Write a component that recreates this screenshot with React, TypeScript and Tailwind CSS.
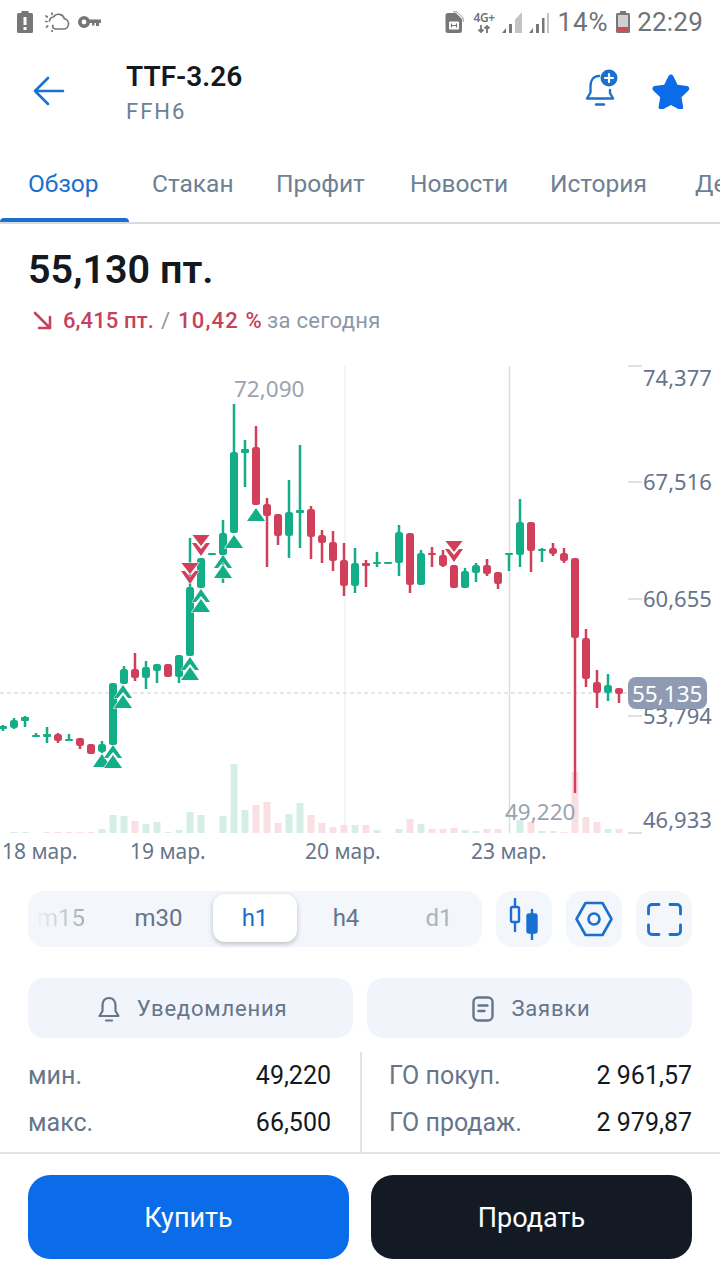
import React from "react";

const BLUE = "#1a6fd0";
const GREEN = "#13ad87";
const RED = "#d0405a";

// x, wick top, wick bottom, body top, body bottom, colour
type Candle = [number, number, number, number, number, "g" | "r"];

const CANDLES: Candle[] = [
  [3, 725, 731, 726, 729, "g"],
  [14, 718, 729, 720, 728, "g"],
  [25, 716, 727, 717, 721, "g"],
  [36, 733, 737, 735, 737, "g"],
  [47, 727, 743, 734, 737, "g"],
  [58, 733, 743, 734, 741, "r"],
  [69, 734, 741, 739, 741, "g"],
  [80, 738, 749, 738, 746, "r"],
  [91, 744, 754, 744, 754, "r"],
  [102, 741, 753, 744, 752, "g"],
  [113, 683, 745, 683, 745, "g"],
  [124, 666, 684, 669, 684, "g"],
  [135, 653, 681, 669, 678, "r"],
  [146, 661, 689, 667, 678, "g"],
  [157, 664, 683, 664, 671, "g"],
  [168, 664, 677, 664, 677, "r"],
  [179, 655, 683, 655, 677, "g"],
  [190, 538, 656, 587, 656, "g"],
  [201, 558, 588, 558, 588, "g"],
  [212, 553, 555, 553, 555, "g"],
  [223, 520, 583, 533, 555, "g"],
  [234, 404, 533, 452, 533, "g"],
  [245, 440, 487, 449, 453, "g"],
  [256, 426, 505, 447, 505, "r"],
  [267, 498, 567, 504, 516, "r"],
  [278, 514, 545, 514, 536, "r"],
  [289, 480, 558, 512, 536, "g"],
  [300, 445, 548, 510, 513, "g"],
  [311, 506, 559, 509, 537, "r"],
  [322, 530, 563, 535, 543, "r"],
  [333, 531, 571, 542, 561, "r"],
  [344, 543, 596, 560, 586, "r"],
  [355, 548, 593, 563, 586, "g"],
  [366, 560, 587, 563, 566, "r"],
  [377, 552, 567, 562, 564, "g"],
  [388, 562, 564, 562, 564, "g"],
  [399, 525, 576, 532, 563, "g"],
  [410, 533, 593, 533, 585, "r"],
  [421, 550, 585, 553, 585, "g"],
  [432, 547, 567, 553, 555, "r"],
  [443, 550, 567, 555, 566, "r"],
  [454, 565, 588, 565, 588, "r"],
  [465, 568, 588, 571, 588, "g"],
  [476, 563, 582, 565, 573, "g"],
  [487, 559, 576, 565, 574, "r"],
  [498, 572, 589, 572, 584, "r"],
  [509, 553, 571, 553, 555, "g"],
  [520, 499, 567, 522, 555, "g"],
  [531, 522, 572, 522, 551, "r"],
  [542, 548, 562, 549, 551, "g"],
  [553, 543, 556, 548, 554, "r"],
  [564, 548, 563, 553, 561, "r"],
  [575, 558, 793, 558, 638, "r"],
  [586, 629, 687, 638, 679, "r"],
  [597, 670, 708, 682, 693, "r"],
  [608, 674, 701, 685, 693, "g"],
  [619, 688, 703, 688, 694, "r"],
];

const VOLUMES: [number, number, "g" | "r"][] = [
  [14, 1, "g"], [25, 1, "g"], [47, 1, "r"], [58, 1, "r"], [69, 1, "r"], [80, 1, "r"], [91, 1, "r"],
  [102, 4, "g"], [113, 18, "g"], [124, 17, "g"], [135, 12, "r"], [146, 9, "g"], [157, 11, "g"],
  [168, 1, "g"], [179, 3, "g"], [190, 21, "g"], [201, 18, "g"], [223, 17, "g"], [234, 69, "g"],
  [245, 23, "g"], [256, 28, "r"], [267, 31, "r"], [278, 10, "r"], [289, 19, "g"], [300, 30, "g"],
  [311, 18, "r"], [322, 10, "r"], [333, 6, "r"], [344, 8, "r"], [355, 8, "g"], [366, 8, "r"],
  [377, 3, "g"], [399, 4, "g"], [410, 14, "r"], [421, 9, "g"], [432, 4, "r"], [443, 4, "r"],
  [454, 5, "r"], [465, 3, "g"], [476, 2, "g"], [487, 4, "r"], [498, 4, "r"], [520, 13, "g"],
  [531, 11, "r"], [542, 2, "g"], [553, 2, "r"], [564, 1, "r"], [575, 61, "r"], [586, 16, "r"],
  [597, 11, "r"], [608, 4, "g"], [619, 4, "r"],
];

const PRICE_TICKS = [
  { y: 366, label: "74,377", ty: 386 },
  { y: 482, label: "67,516", ty: 490 },
  { y: 599, label: "60,655", ty: 607 },
  { y: 716, label: "53,794", ty: 724 },
  { y: 833, label: "46,933", ty: 828 },
];

const DATES = [
  { x: 2, label: "18 мар." },
  { x: 130, label: "19 мар." },
  { x: 305, label: "20 мар." },
  { x: 471, label: "23 мар." },
];

function UpMarker({ x, top, chevron }: { x: number; top: number; chevron?: boolean }) {
  return (
    <g>
      {chevron && (
        <polygon
          points={`${x},${top - 10} ${x + 9},${top + 3} ${x + 5},${top + 3} ${x},${top - 3} ${x - 5},${top + 3} ${x - 9},${top + 3}`}
          fill={GREEN}
          stroke="#fff"
          strokeWidth="1"
          paintOrder="stroke"
        />
      )}
      <polygon points={`${x - 9},${top + 13} ${x + 9},${top + 13} ${x},${top}`} fill={GREEN} stroke="#fff" strokeWidth="1.2" paintOrder="stroke" />
    </g>
  );
}

function DownMarker({ x, top }: { x: number; top: number }) {
  return (
    <g>
      <polygon
        points={`${x - 9},${top + 8} ${x - 5},${top + 8} ${x},${top + 14} ${x + 5},${top + 8} ${x + 9},${top + 8} ${x},${top + 21}`}
        fill={RED}
        stroke="#fff"
        strokeWidth="1"
        paintOrder="stroke"
      />
      <polygon points={`${x - 8.5},${top} ${x + 8.5},${top} ${x},${top + 11}`} fill={RED} stroke="#fff" strokeWidth="1.2" paintOrder="stroke" />
    </g>
  );
}

function Chart() {
  return (
    <svg width="720" height="510" viewBox="0 360 720 510" className="block font-['Noto_Sans',sans-serif]">
      <line x1="345" y1="366" x2="345" y2="833" stroke="#f1f2f3" strokeWidth="1.5" />
      <line x1="509.5" y1="366" x2="509.5" y2="833" stroke="#dcdde0" strokeWidth="1.5" />
      <line x1="0" y1="693" x2="628" y2="693" stroke="#c9cdd2" strokeWidth="1" strokeDasharray="4 3" />

      {VOLUMES.map(([x, h, c]) => (
        <rect key={x} x={x - 3.5} y={833 - h} width="7" height={h} fill={c === "g" ? "#d5efe8" : "#fae0e4"} />
      ))}

      {CANDLES.map(([x, wt, wb, bt, bb, c]) => {
        const fill = c === "g" ? GREEN : RED;
        return (
          <g key={x}>
            <rect x={x - 1.25} y={wt} width="2.5" height={wb - wt} fill={fill} />
            <rect x={x - 4} y={bt} width="8" height={Math.max(bb - bt, 2)} rx={bb - bt > 4 ? 2.5 : 1} fill={fill} />
          </g>
        );
      })}

      <UpMarker x={102} top={754} />
      <UpMarker x={113} top={755} chevron />
      <UpMarker x={123} top={695} chevron />
      <UpMarker x={190} top={667} chevron />
      <UpMarker x={201} top={599} chevron />
      <UpMarker x={223} top={565} chevron />
      <UpMarker x={234} top={535} />
      <UpMarker x={256} top={508} />
      <DownMarker x={190} top={563} />
      <DownMarker x={201} top={535} />
      <DownMarker x={454} top={541} />

      <text x="234" y="397" fontSize="22.5" fill="#9aa3b0">72,090</text>
      <text x="505" y="820" fontSize="22.5" fill="#9aa3b0">49,220</text>

      {PRICE_TICKS.map((t) => (
        <g key={t.label}>
          <line x1="628" y1={t.y} x2="642" y2={t.y} stroke="#d5d7da" strokeWidth="1.5" />
          <text x="643" y={t.ty} fontSize="22" fill="#66758a">{t.label}</text>
        </g>
      ))}

      <rect x="628" y="677" width="79" height="32" rx="8" fill="#8f9bb3" />
      <text x="632" y="702" fontSize="22.5" fill="#fff">55,135</text>

      {DATES.map((d) => (
        <text key={d.label} x={d.x} y="859" fontSize="21" fill="#66758a">{d.label}</text>
      ))}
    </svg>
  );
}

function StatusBar() {
  return (
    <div className="flex h-[44px] items-center justify-between pl-[17px] pr-[17px] text-[#6f7377]">
      <div className="flex items-center">
        <svg width="16" height="22" viewBox="0 0 16 22">
          <rect x="4.5" y="0" width="7" height="3" fill="#777" />
          <rect x="0" y="2" width="16" height="20" rx="1.5" fill="#777" />
          <rect x="6.5" y="6" width="3" height="8" fill="#fff" />
          <rect x="6.5" y="16" width="3" height="3" fill="#fff" />
        </svg>
        <svg width="25" height="20" viewBox="0 0 25 20" className="ml-[12px]" fill="none" stroke="#777" strokeWidth="1.7" strokeLinecap="round">
          <path d="M8 13.500c-1.500 2.500 1 3.500 3 3.500h7.500a5.200 5.200 0 0 0 .8-10.300A6 6 0 0 0 8.500 5c-2.500 0-4 2-4 4" />
          <path d="M7 1v1.500M1 4l1.200 1M0.500 9.500H2M1.500 15l1.200-1M7 18.500V20" />
        </svg>
        <svg width="23" height="12" viewBox="0 0 23 12" className="ml-[8px]">
          <path d="M6 0a6 6 0 1 1-5.600 8A6 6 0 0 1 6 0zm0 3.600a2.400 2.400 0 1 0 0 4.800 2.400 2.400 0 0 0 0-4.800z" fill="#777" fillRule="evenodd" />
          <path d="M11 3.500h12v3.500h-2v3h-3V7h-1.500v2.500H14V7h-3z" fill="#777" />
        </svg>
      </div>
      <div className="flex items-center font-['Roboto',sans-serif]">
        <svg width="19" height="22" viewBox="0 0 19 22">
          <path d="M3 2h8l6 6v11.500a2.500 2.500 0 0 1-2.500 2.500h-11.500A2.500 2.500 0 0 1 0.500 19.500V4.500A2.500 2.500 0 0 1 3 2z" fill="#777" />
          <path d="M8 0.800h4l6.200 6.200v4" fill="none" stroke="#999" strokeWidth="1" />
          <rect x="4" y="10.500" width="10" height="8" rx="1" fill="#fff" />
          <path d="M6.500 12.500v4M11.500 12.500v4M6.500 14.500h5" stroke="#777" strokeWidth="1.2" />
        </svg>
        <div className="ml-[10px] flex w-[21px] flex-col items-center font-['Noto_Sans',sans-serif] text-[12px] font-semibold leading-[12px]">
          <span className="tracking-[-0.5px]">4G+</span>
          <svg width="14" height="8" viewBox="0 0 14 8" fill="none" stroke="#777" strokeWidth="1.800" className="mt-[1px]">
            <path d="M4 0v7M1.500 4.500 4 7l2.500-2.500M10 8V1M7.500 3.500 10 1l2.500 2.500" />
          </svg>
        </div>
        <svg width="20" height="21" viewBox="0 0 20 21" className="ml-[7px]">
          <path d="M0 21l4-5v5z" fill="#777" />
          <rect x="7" y="12" width="3" height="9" fill="#777" />
          <path d="M13 7.500 20 0v21h-7z" fill="#c2c4c6" />
        </svg>
        <svg width="20" height="21" viewBox="0 0 20 21" className="ml-[7px]">
          <path d="M0 21l4-5v5z" fill="#777" />
          <rect x="7" y="12" width="3" height="9" fill="#777" />
          <rect x="13" y="6" width="2.500" height="15" fill="#777" />
          <rect x="18" y="1" width="2" height="20" fill="#c2c4c6" />
        </svg>
        <span className="ml-[9px] text-[26px] leading-none tracking-[0.8px]">14%</span>
        <svg width="14" height="22" viewBox="0 0 14 22" className="ml-[8px]">
          <rect x="4" y="0" width="6" height="3" fill="#777" />
          <rect x="0" y="2" width="14" height="20" rx="1.5" fill="#777" />
          <rect x="2" y="4" width="10" height="12" fill="#cfd0d2" />
          <rect x="2" y="16" width="10" height="4" fill="#d04a55" />
        </svg>
        <span className="ml-[7px] text-[26px] leading-none tracking-[0.2px]">22:29</span>
      </div>
    </div>
  );
}

function Header() {
  return (
    <div className="flex h-[100px] items-start">
      <svg width="32" height="30" viewBox="0 0 32 30" className="ml-[33px] mt-[32px]" fill="none" stroke={BLUE} strokeWidth="2.6" strokeLinecap="round" strokeLinejoin="round">
        <path d="M30 15H2M15 2 2 15l13 13" />
      </svg>
      <div className="ml-[61px] mt-[16px] flex-1">
        <div className="text-[28px] font-semibold leading-[34px] text-[#14181f]">TTF-3.26</div>
        <div className="mt-[4px] text-[22px] leading-[28px] tracking-[2px] text-[#6d8095]">FFH6</div>
      </div>
      <svg width="34" height="40" viewBox="0 0 34 40" className="mt-[25px]" fill="none" stroke={BLUE} strokeWidth="2.4" strokeLinecap="round" strokeLinejoin="round">
        <path d="M14 7C8 7 5.500 12 5.500 17v6.500L2 29.500h26l-3-5.500v-3" />
        <path d="M11 35.500h8" />
        <circle cx="24" cy="9" r="8.500" fill={BLUE} stroke="none" />
        <path d="M24 5v8M20 9h8" stroke="#fff" strokeWidth="2.2" />
      </svg>
      <svg width="38" height="36" viewBox="0 0 38 36" className="ml-[33px] mr-[30px] mt-[29px]">
        <path
          d="M19 1.500c1 0 1.800.6 2.300 1.600l4.200 8.600 9.500 1.400c2.200.3 3 3 1.400 4.500l-6.900 6.700 1.600 9.400c.4 2.200-1.900 3.900-3.900 2.800L19 32.100l-8.500 4.400c-2 1-4.300-.6-3.900-2.800l1.600-9.400-6.900-6.700C-.3 16.100.5 13.400 2.700 13.100l9.500-1.400 4.300-8.600c.5-1 1.500-1.600 2.500-1.600z"
          fill="#0a6ce8"
        />
      </svg>
    </div>
  );
}

function Tabs() {
  const tabs = [
    { label: "Обзор", w: "w-[124px]", active: true },
    { label: "Стакан", w: "w-[124px]" },
    { label: "Профит", w: "w-[134px]" },
    { label: "Новости", w: "w-[140px]" },
    { label: "История", w: "w-[145px]" },
    { label: "Деньги", w: "w-[100px]" },
  ];
  return (
    <div className="relative h-[80px] overflow-hidden border-b-[2px] border-[#d8dadd]">
      <div className="flex pl-[28px] pt-[23px] text-[24.5px] leading-[34px] text-[#6d8095]">
        {tabs.map((t) => (
          <span key={t.label} className={`shrink-0 ${t.w} ${t.active ? "text-[#1a6fd0]" : ""}`}>
            {t.label}
          </span>
        ))}
      </div>
      <div className="absolute bottom-0 left-0 h-[4px] w-[129px] rounded-t-[4px] bg-[#1a6fd0]" />
    </div>
  );
}

function PriceBlock() {
  return (
    <div className="h-[136px] pl-[28px]">
      <div className="pt-[20px] text-[39.5px] font-semibold leading-[52px] text-[#14181f]">55,130 пт.</div>
      <div className="mt-[10px] flex items-center text-[22px] leading-[30px]">
        <svg width="20" height="20" viewBox="0 0 20 20" className="ml-[5px]" fill="none" stroke="#c4425a" strokeWidth="2.6" strokeLinecap="round" strokeLinejoin="round">
          <path d="M2 2l15 15M17 6v11H6" />
        </svg>
        <span className="ml-[10px] font-medium tracking-[0.1px] text-[#c4425a]">6,415 пт.</span>
        <span className="ml-[7px] text-[#8b98a8]">/</span>
        <span className="ml-[8px] font-medium tracking-[1.2px] text-[#c4425a]">10,42 %</span>
        <span className="ml-[4px] tracking-[0.3px] text-[#8b98a8]">за сегодня</span>
      </div>
    </div>
  );
}

function IntervalBar() {
  const items = [
    { label: "m15", cls: "w-[92px] pl-[9px] justify-start" },
    { label: "m30", cls: "w-[93px] pr-[16px] text-[#66758a]" },
    { label: "h1", cls: "w-[84px] text-[#1a6fd0] bg-white rounded-[12px] shadow-[0_2px_5px_rgba(40,50,70,0.28)]" },
    { label: "h4", cls: "w-[92px] pl-[6px] text-[#66758a]" },
    { label: "d1", cls: "w-[91px] pl-[9px] text-[#a9b3bf]" },
  ];
  return (
    <div className="flex h-[56px] items-center gap-[14px] px-[28px]">
      <div className="flex h-full w-[454px] items-center rounded-[16px] bg-[#f3f6fb] pb-[2px] text-[24px]">
        {items.map((i) => (
          <div key={i.label} className={`flex h-[48px] items-center justify-center ${i.cls}`}>
            {i.label === "m15" ? (
              <span className="bg-gradient-to-r from-[#eef1f5] to-[#a3aeba] bg-clip-text text-transparent">{i.label}</span>
            ) : (
              i.label
            )}
          </div>
        ))}
      </div>
      <div className="flex h-full w-[56px] items-center justify-center rounded-[16px] bg-[#f3f6fb]">
        <svg width="30" height="42" viewBox="0 0 30 42" fill="none" stroke={BLUE} strokeWidth="2.4" strokeLinecap="round">
          <path d="M6 1v7M6 25v8M23 12v4M23 35v7" />
          <rect x="2" y="9" width="8" height="15" rx="1.500" />
          <rect x="18.500" y="16.500" width="9" height="18" rx="1.500" fill={BLUE} />
        </svg>
      </div>
      <div className="flex h-full w-[56px] items-center justify-center rounded-[16px] bg-[#f3f6fb]">
        <svg width="38" height="36" viewBox="0 0 38 36" fill="none" stroke={BLUE} strokeWidth="2.6" strokeLinejoin="round">
          <path d="M10.500 2h17L36.500 18l-9 16h-17L1.500 18z" />
          <circle cx="19" cy="18" r="5.500" />
        </svg>
      </div>
      <div className="flex h-full w-[56px] items-center justify-center rounded-[16px] bg-[#f3f6fb]">
        <svg width="35" height="33" viewBox="0 0 35 33" fill="none" stroke={BLUE} strokeWidth="2.8" strokeLinecap="round">
          <path d="M12 1.500H5A3.500 3.500 0 0 0 1.500 5v6M23 1.500h7A3.500 3.500 0 0 1 33.500 5v6M12 31.500H5A3.500 3.500 0 0 1 1.500 28v-6M23 31.500h7a3.500 3.500 0 0 0 3.500-3.500v-6" />
        </svg>
      </div>
    </div>
  );
}

function ActionButtons() {
  return (
    <div className="mt-[31px] flex h-[60px] gap-[14px] px-[28px] text-[22px] tracking-[0.8px] text-[#66758a]">
      <div className="flex flex-1 items-center justify-center gap-[17px] rounded-[16px] bg-[#f1f4fa] pl-[4px] pt-[1px]">
        <svg width="22" height="26" viewBox="0 0 22 26" fill="none" stroke="#66758a" strokeWidth="2.2" strokeLinecap="round" strokeLinejoin="round">
          <path d="M11 2C6 2 4.500 6 4.500 10v5L1.500 20h19l-3-5v-5C17.500 6 16 2 11 2z" />
          <path d="M8 24.500h6" />
        </svg>
        <span>Уведомления</span>
      </div>
      <div className="flex flex-1 items-center justify-center gap-[17px] rounded-[16px] bg-[#f1f4fa] pl-[4px] pt-[1px]">
        <svg width="22" height="26" viewBox="0 0 22 26" fill="none" stroke="#66758a" strokeWidth="2.4" strokeLinecap="round">
          <rect x="1.500" y="1.500" width="19" height="23" rx="4.500" />
          <path d="M6.500 9.500h9M6.500 15h6" />
        </svg>
        <span>Заявки</span>
      </div>
    </div>
  );
}

function Stats() {
  const left = [
    { k: "мин.", v: "49,220" },
    { k: "макс.", v: "66,500" },
  ];
  const right = [
    { k: "ГО покуп.", v: "2 961,57" },
    { k: "ГО продаж.", v: "2 979,87" },
  ];
  const Column = ({ rows, cls }: { rows: { k: string; v: string }[]; cls: string }) => (
    <div className={`flex flex-col gap-[13px] pt-[7px] ${cls}`}>
      {rows.map((r) => (
        <div key={r.k} className="flex h-[34px] items-center justify-between">
          <span className="text-[#66758a]">{r.k}</span>
          <span className="text-[#14181f]">{r.v}</span>
        </div>
      ))}
    </div>
  );
  return (
    <div className="mt-[14px] flex h-[102px] border-b-[2px] border-[#e1e3e6] text-[25px]">
      <Column rows={left} cls="w-[362px] pl-[28px] pr-[29px] border-r-[2px] border-[#e1e3e6]" />
      <Column rows={right} cls="flex-1 pl-[27px] pr-[28px]" />
    </div>
  );
}

export default function App() {
  return (
    <div className="flex h-[1280px] w-[720px] flex-col overflow-hidden bg-white font-['Roboto',sans-serif]">
      <StatusBar />
      <Header />
      <Tabs />
      <PriceBlock />
      <Chart />
      <div className="mt-[21px]">
        <IntervalBar />
      </div>
      <ActionButtons />
      <Stats />
      <div className="mt-[21px] flex gap-[22px] px-[28px] text-[27px] text-white">
        <div className="flex h-[84px] flex-1 items-center justify-center rounded-[22px] bg-[#0a6ce8] pt-[3px]">Купить</div>
        <div className="flex h-[84px] flex-1 items-center justify-center rounded-[22px] bg-[#131a24] pt-[3px]">Продать</div>
      </div>
    </div>
  );
}
